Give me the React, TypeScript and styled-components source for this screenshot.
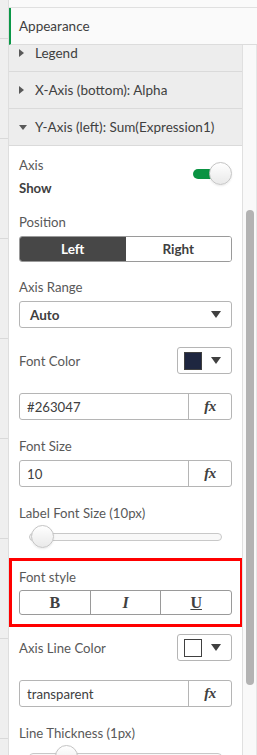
import React from "react";
import styled, { createGlobalStyle, css } from "styled-components";

const GlobalStyle = createGlobalStyle`
  html, body { margin: 0; padding: 0; background: #ffffff; }
  * { box-sizing: border-box; }
`;

const FONT = `Lato, "Noto Sans", "Liberation Sans", sans-serif`;

const Page = styled.div`
  display: flex;
  width: 257px;
  height: 755px;
  overflow: hidden;
  background: #ffffff;
  font-family: ${FONT};
  font-size: 13.2px;
  color: #404040;
`;

const SideStrip = styled.div`
  flex: none;
  width: 9px;
  background: #efefef;
  border-right: 1px solid #dedede;
  padding-top: 38px;
  display: flex;
  flex-direction: column;
`;

const StripTick = styled.div`
  flex: none;
  height: 100px;
  border-top: 1px solid #d9d9d9;
`;

const Main = styled.div`
  flex: 1;
  min-width: 0;
  display: flex;
  flex-direction: column;
`;

const TopBar = styled.div`
  flex: none;
  height: 8px;
  background: #fafafa;
  border-bottom: 1px solid #e0e0e0;
`;

const Header = styled.div`
  flex: none;
  height: 37px;
  display: flex;
  align-items: center;
  padding-left: 8px;
  background: #fafafa;
  border-left: 2px solid #0b9747;
  border-bottom: 1px solid #dcdcdc;
  font-size: 13.5px;
  color: #404040;
`;

const Body = styled.div`
  flex: 1;
  min-height: 0;
  display: flex;
  overflow: hidden;
`;

const Scroller = styled.div`
  flex: none;
  width: 233px;
  overflow: hidden;
`;

const Content = styled.div`
  margin-top: -10px;
`;

const ScrollTrack = styled.div`
  flex: 1;
  background: #f9f9f9;
  border-left: 1px solid #e0e0e0;
  border-right: 1px solid #e6e6e6;
  padding: 165px 0 0 3px;
`;

const Thumb = styled.div`
  width: 8px;
  height: 475px;
  border-radius: 4px;
  background: #b3b3b3;
`;

const AccRow = styled.div`
  height: 37px;
  display: flex;
  align-items: center;
  gap: 10px;
  padding-left: 10px;
  background: #ededed;
  border-bottom: 1px solid #dadada;
  font-size: 13.5px;
  color: #404040;
`;

const Caret = styled.span<{ $open?: boolean }>`
  flex: none;
  width: 0;
  height: 0;
  ${(p) =>
    p.$open
      ? css`
          border-left: 4px solid transparent;
          border-right: 4px solid transparent;
          border-top: 5px solid #595959;
          margin-right: -2px;
        `
      : css`
          border-top: 4px solid transparent;
          border-bottom: 4px solid transparent;
          border-left: 5px solid #595959;
          margin-right: 1px;
        `}
`;

const Panel = styled.div`
  background: #ffffff;
  padding: 9px 10px 0 10px;
  display: flex;
  flex-direction: column;
`;

const Label = styled.div<{ $mt?: number }>`
  height: 20px;
  line-height: 20px;
  color: #595959;
  margin-top: ${(p) => p.$mt ?? 0}px;
  margin-bottom: 4px;
  white-space: nowrap;
`;

const ToggleRow = styled.div`
  display: flex;
  justify-content: space-between;
  align-items: flex-start;
`;

const ToggleText = styled.div`
  display: flex;
  flex-direction: column;
  gap: 3px;
`;

const PlainLine = styled.div`
  height: 20px;
  line-height: 20px;
  color: #595959;
`;

const BoldLine = styled.div`
  height: 20px;
  line-height: 20px;
  font-weight: 700;
  color: #404040;
`;

const Switch = styled.div`
  position: relative;
  width: 40px;
  height: 24px;
  margin-top: 7px;
`;

const SwitchTrack = styled.div`
  position: absolute;
  left: 1px;
  top: 7px;
  width: 28px;
  height: 10px;
  border-radius: 5px;
  background: #0a9342;
`;

const Knob = styled.div<{ $size?: number }>`
  position: absolute;
  width: ${(p) => p.$size ?? 23}px;
  height: ${(p) => p.$size ?? 23}px;
  border-radius: 50%;
  background: linear-gradient(#ffffff, #e9e9e9);
  border: 1px solid #c4c4c4;
  box-shadow: 0 1px 2px rgba(0, 0, 0, 0.08);
`;

const SwitchKnob = styled(Knob)`
  right: 0;
  top: 0;
`;

const Segmented = styled.div`
  display: flex;
  height: 26px;
  border: 1px solid #9a9a9a;
  border-radius: 3px;
  overflow: hidden;
`;

const SegButton = styled.div<{ $active?: boolean }>`
  flex: 1;
  display: flex;
  align-items: center;
  justify-content: center;
  font-weight: 700;
  font-size: 13.5px;
  color: ${(p) => (p.$active ? "#ffffff" : "#404040")};
  background: ${(p) => (p.$active ? "#474747" : "#ffffff")};
`;

const SelectBox = styled.div`
  height: 27px;
  display: flex;
  align-items: center;
  justify-content: space-between;
  padding: 0 10px 0 10px;
  border: 1px solid #b5b5b5;
  border-radius: 3px;
  font-weight: 700;
  font-size: 13.5px;
  color: #404040;
`;

const DownTri = styled.span`
  width: 0;
  height: 0;
  border-left: 5px solid transparent;
  border-right: 5px solid transparent;
  border-top: 7px solid #404040;
`;

const ColorRow = styled.div<{ $mt?: number }>`
  display: flex;
  align-items: center;
  justify-content: space-between;
  margin-top: ${(p) => p.$mt ?? 0}px;
`;

const RowLabel = styled.div`
  color: #595959;
  line-height: 20px;
`;

const ColorButton = styled.div`
  width: 55px;
  height: 27px;
  display: flex;
  align-items: center;
  justify-content: space-between;
  padding: 0 10px 0 6px;
  border: 1px solid #b5b5b5;
  border-radius: 3px;
`;

const Swatch = styled.span<{ $color: string }>`
  width: 18px;
  height: 18px;
  background: ${(p) => p.$color};
  border: 1px solid #404040;
`;

const InputGroup = styled.div<{ $mt?: number }>`
  display: flex;
  height: 27px;
  margin-top: ${(p) => p.$mt ?? 0}px;
  border: 1px solid #b5b5b5;
  border-radius: 3px;
`;

const InputText = styled.div`
  flex: 1;
  display: flex;
  align-items: center;
  padding-left: 7px;
  color: #404040;
`;

const FxButton = styled.div`
  flex: none;
  width: 43px;
  display: flex;
  align-items: center;
  justify-content: center;
  border-left: 1px solid #b5b5b5;
  font-family: "Liberation Serif", "DejaVu Serif", serif;
  font-weight: 700;
  font-style: italic;
  font-size: 15px;
  color: #404040;
  letter-spacing: -0.5px;
`;

const Slider = styled.div`
  position: relative;
  height: 24px;
  margin: -3px 10px 0 10px;
`;

const SliderTrack = styled.div`
  position: absolute;
  left: 0;
  right: 0;
  top: 9px;
  height: 8px;
  border-radius: 4px;
  background: #f8f8f8;
  border: 1px solid #c8c8c8;
`;

const SliderKnob = styled(Knob)`
  top: 1px;
`;

const Highlight = styled.div`
  margin: 10px -11px 0 -10px;
  border: 3px solid #ff0000;
  padding: 6px 8px 9px 7px;
`;

const StyleButtons = styled.div`
  display: flex;
  height: 25px;
  margin-top: -1px;
  border: 1px solid #9a9a9a;
  border-radius: 3px;
`;

const StyleButton = styled.div<{ $kind: "b" | "i" | "u" }>`
  flex: 1;
  display: flex;
  align-items: center;
  justify-content: center;
  font-family: "Liberation Serif", "DejaVu Serif", serif;
  font-weight: 700;
  font-size: 16px;
  color: #404040;
  font-style: ${(p) => (p.$kind === "i" ? "italic" : "normal")};
  text-decoration: ${(p) => (p.$kind === "u" ? "underline" : "none")};
  & + & {
    border-left: 1px solid #9a9a9a;
  }
`;

export default function App() {
  return (
    <>
      <GlobalStyle />
      <Page>
        <SideStrip>
          {Array.from({ length: 8 }).map((_, i) => (
            <StripTick key={i} />
          ))}
        </SideStrip>
        <Main>
          <TopBar />
          <Header>Appearance</Header>
          <Body>
            <Scroller>
              <Content>
                <AccRow>
                  <Caret />
                  Legend
                </AccRow>
                <AccRow>
                  <Caret />
                  X-Axis (bottom): Alpha
                </AccRow>
                <AccRow>
                  <Caret $open />
                  Y-Axis (left): Sum(Expression1)
                </AccRow>
                <Panel>
                  <ToggleRow>
                    <ToggleText>
                      <PlainLine>Axis</PlainLine>
                      <BoldLine>Show</BoldLine>
                    </ToggleText>
                    <Switch>
                      <SwitchTrack />
                      <SwitchKnob />
                    </Switch>
                  </ToggleRow>

                  <Label $mt={14}>Position</Label>
                  <Segmented>
                    <SegButton $active>Left</SegButton>
                    <SegButton>Right</SegButton>
                  </Segmented>

                  <Label $mt={15}>Axis Range</Label>
                  <SelectBox>
                    Auto
                    <DownTri />
                  </SelectBox>

                  <ColorRow $mt={19}>
                    <RowLabel>Font Color</RowLabel>
                    <ColorButton>
                      <Swatch $color="#1e2640" />
                      <DownTri />
                    </ColorButton>
                  </ColorRow>
                  <InputGroup $mt={19}>
                    <InputText>#263047</InputText>
                    <FxButton>fx</FxButton>
                  </InputGroup>

                  <Label $mt={16}>Font Size</Label>
                  <InputGroup>
                    <InputText>10</InputText>
                    <FxButton>fx</FxButton>
                  </InputGroup>

                  <Label $mt={16}>Label Font Size (10px)</Label>
                  <Slider>
                    <SliderTrack />
                    <SliderKnob style={{ left: 2 }} />
                  </Slider>

                  <Highlight>
                    <Label>Font style</Label>
                    <StyleButtons>
                      <StyleButton $kind="b">B</StyleButton>
                      <StyleButton $kind="i">I</StyleButton>
                      <StyleButton $kind="u">U</StyleButton>
                    </StyleButtons>
                  </Highlight>

                  <ColorRow $mt={7}>
                    <RowLabel>Axis Line Color</RowLabel>
                    <ColorButton>
                      <Swatch $color="#ffffff" />
                      <DownTri />
                    </ColorButton>
                  </ColorRow>
                  <InputGroup $mt={19}>
                    <InputText>transparent</InputText>
                    <FxButton>fx</FxButton>
                  </InputGroup>

                  <Label $mt={16}>Line Thickness (1px)</Label>
                  <Slider>
                    <SliderTrack />
                    <SliderKnob style={{ left: 26 }} />
                  </Slider>
                </Panel>
              </Content>
            </Scroller>
            <ScrollTrack>
              <Thumb />
            </ScrollTrack>
          </Body>
        </Main>
      </Page>
    </>
  );
}
